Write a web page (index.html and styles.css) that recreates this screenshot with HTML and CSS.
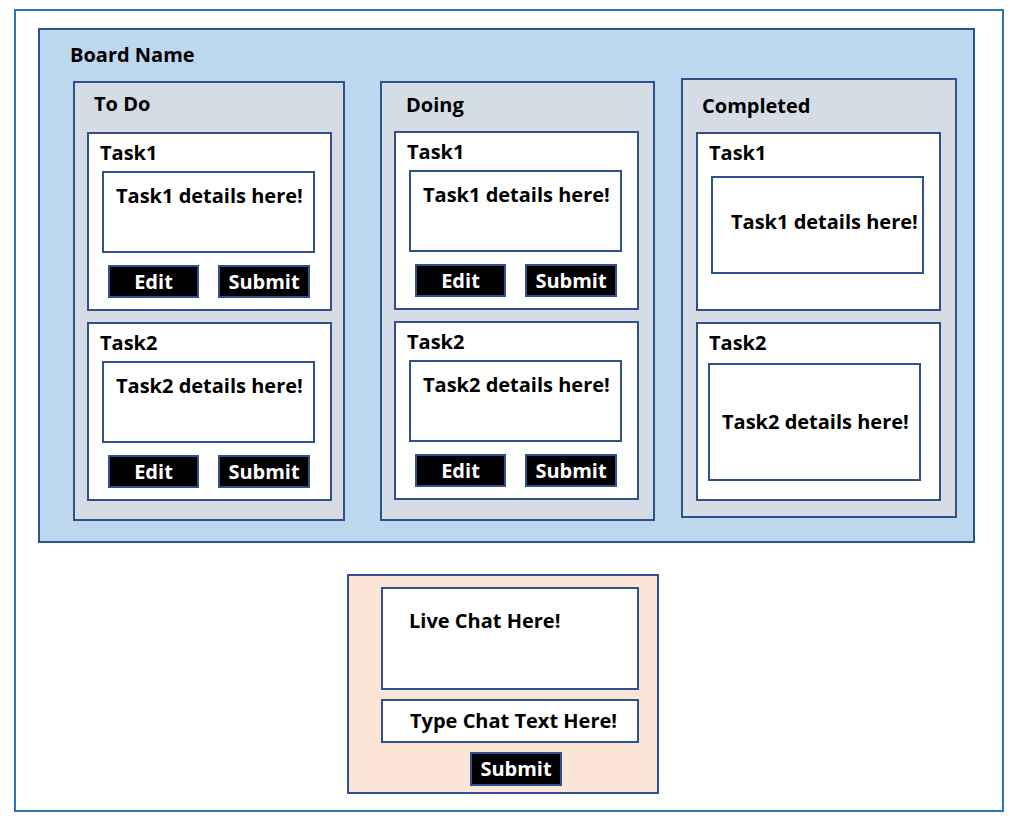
FILE: index.html
```html
<!DOCTYPE html>
<html lang="en">
<head>
  <meta charset="UTF-8" />
  <title>Board</title>
  <link rel="stylesheet" href="styles.css">
</head>
<body>

  <div class="frame">
    <div class="board">
      <h1 class="board-title">Board Name</h1>

      <div class="columns">
        <!-- To Do -->
        <div class="column column-todo">
          <h2 class="col-title">To Do</h2>
          <div class="card">
            <div class="card-title">Task1</div>
            <div class="details">Task1 details here!</div>
            <div class="actions">
              <button class="btn btn-edit">Edit</button>
              <button class="btn btn-submit">Submit</button>
            </div>
          </div>
          <div class="card">
            <div class="card-title">Task2</div>
            <div class="details">Task2 details here!</div>
            <div class="actions">
              <button class="btn btn-edit">Edit</button>
              <button class="btn btn-submit">Submit</button>
            </div>
          </div>
        </div>

        <!-- Doing -->
        <div class="column column-doing">
          <h2 class="col-title">Doing</h2>
          <div class="card">
            <div class="card-title">Task1</div>
            <div class="details">Task1 details here!</div>
            <div class="actions">
              <button class="btn btn-edit">Edit</button>
              <button class="btn btn-submit">Submit</button>
            </div>
          </div>
          <div class="card">
            <div class="card-title">Task2</div>
            <div class="details">Task2 details here!</div>
            <div class="actions">
              <button class="btn btn-edit">Edit</button>
              <button class="btn btn-submit">Submit</button>
            </div>
          </div>
        </div>

        <!-- Completed -->
        <div class="column column-done">
          <h2 class="col-title">Completed</h2>
          <div class="card">
            <div class="card-title">Task1</div>
            <div class="details details-tall">Task1 details here!</div>
          </div>
          <div class="card">
            <div class="card-title">Task2</div>
            <div class="details details-taller">Task2 details here!</div>
          </div>
        </div>
      </div>
    </div>

    <div class="chat">
      <div class="chat-log">Live Chat Here!</div>
      <div class="chat-input">Type Chat Text Here!</div>
      <button class="btn chat-submit">Submit</button>
    </div>
  </div>

</body>
</html>
```

FILE: styles.css
```css
* {
  box-sizing: border-box;
  margin: 0;
  padding: 0;
  font-family: 'Open Sans', 'DejaVu Sans', sans-serif;
  font-weight: 700;
  color: #000;
}

body {
  background: #fff;
}

.frame {
  margin: 9px 0 0 14px;
  width: 990px;
  height: 803px;
  border: 2px solid #2e75b6;
  padding: 17px 0 0 22px;
}

.board {
  width: 937px;
  height: 515px;
  border: 2px solid #2f528f;
  background-color: #bdd7ee;
}

.board-title {
  margin: 13px 0 0 30px;
  font-size: 20px;
  line-height: 24px;
}

.columns {
  display: flex;
  align-items: flex-start;
  margin-top: 11px;
  padding-left: 33px;
}

.column {
  width: 272px;
  height: 440px;
  border: 2px solid #2f528f;
  background-color: #d6dce5;
  padding-left: 12px;
}

.column-todo {
  margin-top: 3px;
}

.column-doing {
  width: 275px;
  margin: 3px 0 0 35px;
}

.column-done {
  width: 276px;
  margin-left: 26px;
  padding-left: 13px;
}

.col-title {
  font-size: 20px;
  line-height: 22px;
  margin: 10px 0 17px 7px;
}

.column-doing .col-title {
  margin: 11px 0 15px 12px;
}

.column-done .col-title {
  margin: 15px 0 15px 6px;
}

.card {
  width: 245px;
  height: 179px;
  border: 2px solid #2f528f;
  background-color: #fff;
  margin-bottom: 11px;
}

.card-title {
  font-size: 20px;
  line-height: 22px;
  margin: 8px 0 0 11px;
}

.details {
  margin: 7px 0 0 13px;
  width: 213px;
  height: 82px;
  border: 2px solid #2f528f;
  padding: 11px 0 0 12px;
  font-size: 20px;
  line-height: 24px;
}

.details-tall {
  height: 98px;
  margin-top: 12px;
  padding: 32px 0 0 18px;
}

.details-taller {
  height: 118px;
  margin: 9px 0 0 10px;
  padding: 45px 0 0 12px;
}

.actions {
  display: flex;
  margin-top: 12px;
}

.btn {
  height: 33px;
  border: 2px solid #2f528f;
  background-color: #000;
  color: #fff;
  font-size: 20px;
  line-height: 28px;
  text-align: center;
}

.btn-edit {
  width: 91px;
  margin-left: 19px;
}

.btn-submit {
  width: 92px;
  margin-left: 19px;
}

.chat {
  margin: 31px 0 0 309px;
  width: 312px;
  height: 220px;
  border: 2px solid #2f528f;
  background-color: #fbe5d6;
  padding: 11px 0 0 32px;
}

.chat-log {
  width: 258px;
  height: 103px;
  border: 2px solid #2f528f;
  background-color: #fff;
  padding: 20px 0 0 26px;
  font-size: 20px;
  line-height: 24px;
}

.chat-input {
  margin-top: 9px;
  width: 258px;
  height: 44px;
  border: 2px solid #2f528f;
  background-color: #fff;
  padding-left: 27px;
  font-size: 20px;
  line-height: 40px;
}

.chat-submit {
  display: block;
  margin: 9px 0 0 89px;
  width: 92px;
  height: 34px;
}
```
